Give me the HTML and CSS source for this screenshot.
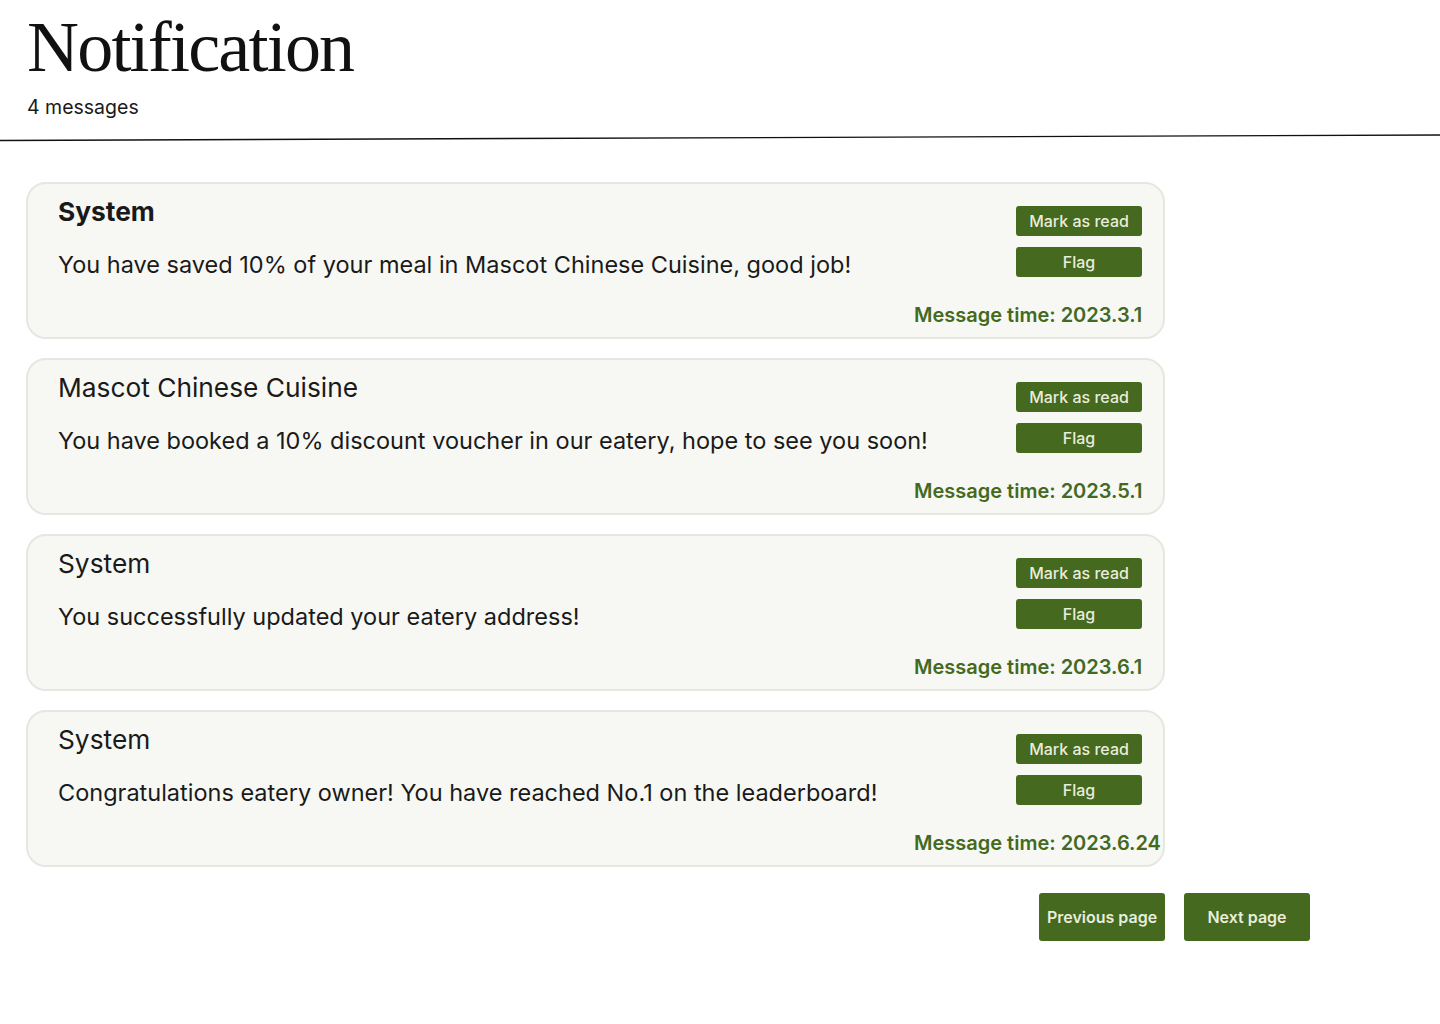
FILE: index.html
```html
<!DOCTYPE html>
<html lang="en">
<head>
<meta charset="utf-8">
<title>Notification</title>
<link rel="stylesheet" href="styles.css">
</head>
<body>
<header class="page-header">
  <h1 class="page-title">Notification</h1>
  <p class="page-count">4 messages</p>
</header>
<svg class="divider" viewBox="0 0 1440 10" preserveAspectRatio="none" aria-hidden="true">
  <line x1="0" y1="7.5" x2="1440" y2="2" stroke="#111" stroke-width="1.4"/>
</svg>
<main class="list">
  <article class="card">
    <div class="card-main">
      <h2 class="card-title bold">System</h2>
      <p class="card-text">You have saved 10% of your meal in Mascot Chinese Cuisine, good job!</p>
    </div>
    <div class="card-side">
      <button class="btn-sm">Mark as read</button>
      <button class="btn-sm">Flag</button>
      <div class="time">Message time: 2023.3.1</div>
    </div>
  </article>
  <article class="card">
    <div class="card-main">
      <h2 class="card-title">Mascot Chinese Cuisine</h2>
      <p class="card-text">You have booked a 10% discount voucher in our eatery, hope to see you soon!</p>
    </div>
    <div class="card-side">
      <button class="btn-sm">Mark as read</button>
      <button class="btn-sm">Flag</button>
      <div class="time">Message time: 2023.5.1</div>
    </div>
  </article>
  <article class="card">
    <div class="card-main">
      <h2 class="card-title">System</h2>
      <p class="card-text">You successfully updated your eatery address!</p>
    </div>
    <div class="card-side">
      <button class="btn-sm">Mark as read</button>
      <button class="btn-sm">Flag</button>
      <div class="time">Message time: 2023.6.1</div>
    </div>
  </article>
  <article class="card">
    <div class="card-main">
      <h2 class="card-title">System</h2>
      <p class="card-text">Congratulations eatery owner! You have reached No.1 on the leaderboard!</p>
    </div>
    <div class="card-side">
      <button class="btn-sm">Mark as read</button>
      <button class="btn-sm">Flag</button>
      <div class="time">Message time: 2023.6.24</div>
    </div>
  </article>
</main>
<nav class="pager">
  <button class="btn-page">Previous page</button>
  <button class="btn-page">Next page</button>
</nav>
</body>
</html>
```
FILE: styles.css
```css
* { box-sizing: border-box; }
html, body { margin: 0; padding: 0; background: #fff; }
body {
  font-family: Inter, "Noto Sans", sans-serif;
  color: #1a1a1a;
}
.page-header {
  padding: 11px 0 0 27px;
}
.page-title {
  margin: 0;
  font-family: "Liberation Serif", "Times New Roman", serif;
  font-weight: 400;
  font-size: 72px;
  line-height: 72px;
  letter-spacing: -1.8px;
  color: #111;
}
.page-count {
  margin: 12px 0 0 0;
  font-size: 19.5px;
  line-height: 24px;
  color: #1a1a1a;
}
.divider {
  display: block;
  width: 100%;
  height: 10px;
  margin-top: 14px;
}
.list {
  display: flex;
  flex-direction: column;
  gap: 19px;
  padding: 39px 0 0 26px;
  width: 1165px;
}
.card {
  display: flex;
  background: #f7f8f3;
  border: 2px solid #e6e7e2;
  border-radius: 20px;
  padding: 10px 21px 10px 30px;
}
.card-main {
  flex: 1;
  min-width: 0;
  padding-top: 2px;
}
.card-title {
  margin: 0;
  font-size: 26.3px;
  line-height: 32px;
  font-weight: 400;
  color: #1a1a1a;
}
.card-title.bold { font-weight: 700; }
.card-text {
  margin: 22px 0 0 0;
  font-size: 23.5px;
  line-height: 30px;
  white-space: nowrap;
  color: #1a1a1a;
}
.card-side {
  width: 228px;
  flex: none;
  display: flex;
  flex-direction: column;
  align-items: flex-end;
}
.btn-sm {
  width: 126px;
  height: 30px;
  margin-top: 11px;
  border: 0;
  border-radius: 3px;
  background: #44691f;
  color: #e8eddc;
  font-family: Inter, sans-serif;
  font-size: 16px;
  font-weight: 500;
  padding: 0;
}
.btn-sm:first-child { margin-top: 12px; }
.time {
  align-self: stretch;
  white-space: nowrap;
  margin-top: 26px;
  font-size: 20px;
  line-height: 24px;
  font-weight: 600;
  color: #44691f;
}
.pager {
  display: flex;
  justify-content: flex-end;
  gap: 19px;
  padding: 26px 130px 0 0;
}
.btn-page {
  width: 126px;
  height: 48px;
  border: 0;
  border-radius: 3px;
  background: #44691f;
  color: #e8eddc;
  font-family: Inter, sans-serif;
  font-size: 16px;
  font-weight: 600;
  padding: 0;
}
```
